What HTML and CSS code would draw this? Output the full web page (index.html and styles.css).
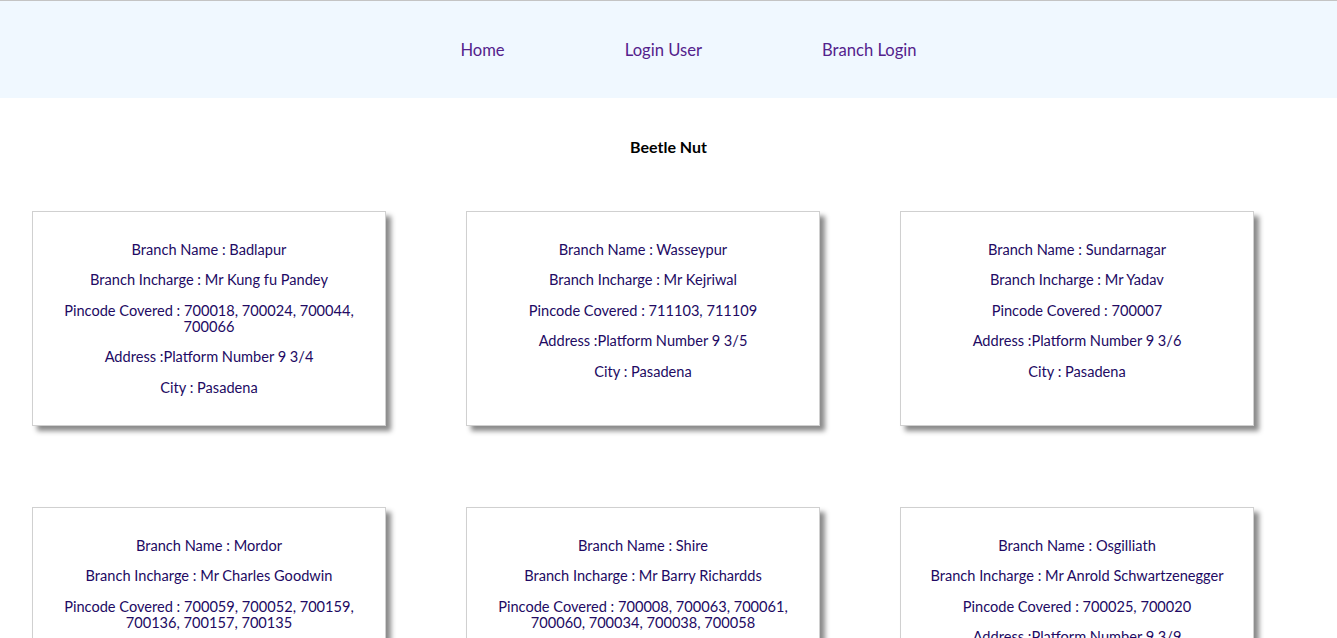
FILE: index.html
```html
<!DOCTYPE html>
<html>
<head>
<meta charset="utf-8">
<link rel="stylesheet" href="styles.css">
</head>
<body>
<nav class="navbar">
  <ul class="nav-list">
    <li class="nav-item"><a class="nav-link" href="#">Home</a></li>
    <li class="nav-item"><a class="nav-link" href="#">Login User</a></li>
    <li class="nav-item"><a class="nav-link" href="#">Branch Login</a></li>
  </ul>
</nav>
<h1 class="title">Beetle Nut</h1>
<div class="grid">
  <div class="card">
    <p>Branch Name : Badlapur</p>
    <p>Branch Incharge : Mr Kung fu Pandey</p>
    <p>Pincode Covered : 700018, 700024, 700044, 700066</p>
    <p>Address :Platform Number 9 3/4</p>
    <p>City : Pasadena</p>
  </div>
  <div class="card">
    <p>Branch Name : Wasseypur</p>
    <p>Branch Incharge : Mr Kejriwal</p>
    <p>Pincode Covered : 711103, 711109</p>
    <p>Address :Platform Number 9 3/5</p>
    <p>City : Pasadena</p>
  </div>
  <div class="card">
    <p>Branch Name : Sundarnagar</p>
    <p>Branch Incharge : Mr Yadav</p>
    <p>Pincode Covered : 700007</p>
    <p>Address :Platform Number 9 3/6</p>
    <p>City : Pasadena</p>
  </div>
  <div class="card">
    <p>Branch Name : Mordor</p>
    <p>Branch Incharge : Mr Charles Goodwin</p>
    <p>Pincode Covered : 700059, 700052, 700159, 700136, 700157, 700135</p>
    <p>Address :Platform Number 9 3/7</p>
    <p>City : Pasadena</p>
  </div>
  <div class="card">
    <p>Branch Name : Shire</p>
    <p>Branch Incharge : Mr Barry Richardds</p>
    <p>Pincode Covered : 700008, 700063, 700061, 700060, 700034, 700038, 700058</p>
    <p>Address :Platform Number 9 3/8</p>
    <p>City : Pasadena</p>
  </div>
  <div class="card">
    <p>Branch Name : Osgilliath</p>
    <p>Branch Incharge : Mr Anrold Schwartzenegger</p>
    <p>Pincode Covered : 700025, 700020</p>
    <p>Address :Platform Number 9 3/9</p>
    <p>City : Pasadena</p>
  </div>
</div>
</body>
</html>
```
FILE: styles.css
```css
html, body {
  margin: 0;
  padding: 0;
}
body {
  font-family: Lato, "Open Sans", sans-serif;
  background: #ffffff;
  border-top: 1px solid #c4c4c4;
}
.navbar {
  background: #f0f8ff;
  height: 97px;
  display: flex;
  align-items: center;
}
.nav-list {
  list-style: none;
  margin: 0;
  padding: 0 0 0 40px;
  width: 100%;
  text-align: center;
}
.nav-item {
  display: inline-block;
  margin: 0 58px;
}
.nav-link {
  color: #54228c;
  text-decoration: none;
  font-size: 16.6px;
}
.title {
  margin: 40px 0 0;
  font-size: 16px;
  font-weight: bold;
  text-align: center;
  color: #000;
  line-height: 18px;
}
.grid {
  display: grid;
  grid-template-columns: repeat(3, 354px);
  column-gap: 80px;
  row-gap: 81px;
  padding: 55px 0 0 32px;
}
.card {
  border: 1px solid #d0d0d0;
  box-shadow: 5px 5px 5px #8a8a8a;
  padding: 15px 16px;
  text-align: center;
  color: #220a63;
  font-size: 14.6px;
  line-height: 16px;
  background: #fff;
}
.card p {
  margin: 14.5px 0;
}
```
